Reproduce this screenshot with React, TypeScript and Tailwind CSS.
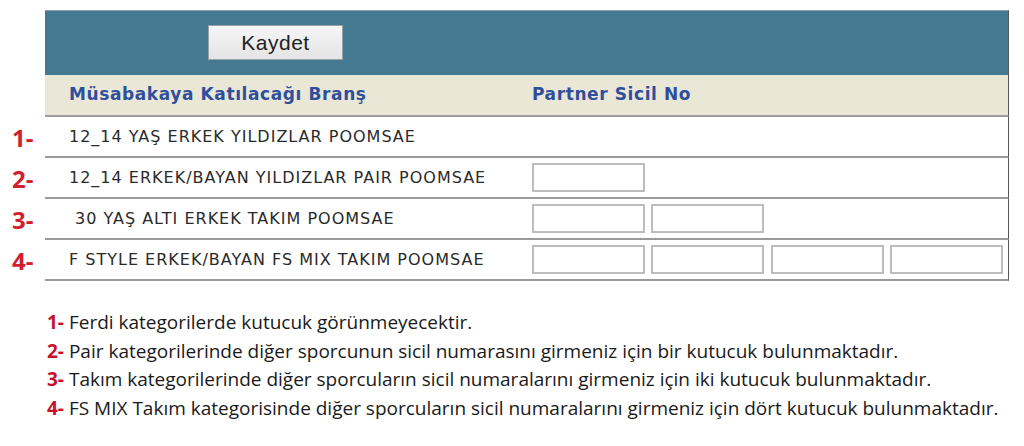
import React from "react";

const rows = [
  { n: "1-", label: "12_14 YAŞ ERKEK YILDIZLAR POOMSAE", boxes: 0, indent: false },
  { n: "2-", label: "12_14 ERKEK/BAYAN YILDIZLAR PAIR POOMSAE", boxes: 1, indent: false },
  { n: "3-", label: "30 YAŞ ALTI ERKEK TAKIM POOMSAE", boxes: 2, indent: true },
  { n: "4-", label: "F STYLE ERKEK/BAYAN FS MIX TAKIM POOMSAE", boxes: 4, indent: false },
];

const notes = [
  { n: "1-", t: "Ferdi kategorilerde kutucuk görünmeyecektir." },
  { n: "2-", t: "Pair kategorilerinde diğer sporcunun sicil numarasını girmeniz için bir kutucuk bulunmaktadır." },
  { n: "3-", t: "Takım kategorilerinde diğer sporcuların sicil numaralarını girmeniz için iki kutucuk bulunmaktadır." },
  { n: "4-", t: "FS MIX Takım kategorisinde diğer sporcuların sicil numaralarını girmeniz için dört kutucuk bulunmaktadır." },
];

export default function App() {
  return (
    <div className="w-[1024px] h-[446px] bg-white overflow-hidden pt-[10px]">
      <div className="grid grid-cols-[45px_964px]">
        {/* blue header */}
        <div />
        <div className="h-[65px] bg-[#457891] border-t border-[#8f9ea4] border-r border-r-[#555] flex items-center">
          <button className="ml-[163px] mt-[-1px] w-[135px] h-[35px] border border-[#9aa4a8] bg-gradient-to-b from-[#f6f6f6] to-[#e4e4e4] text-[21px] text-[#222] tracking-[0.5px] font-['Liberation_Sans',Arial,sans-serif]">
            Kaydet
          </button>
        </div>
        {/* beige header */}
        <div />
        <div className="h-[42px] bg-[#ebe7d6] border-b-2 border-[#9a9a9a] border-r border-r-[#555] flex items-center font-['DejaVu_Sans',Verdana,sans-serif] font-bold text-[17px] tracking-[0.6px] text-[#2f4f9c]">
          <div className="pl-[24px] w-[487px]">Müsabakaya Katılacağı Branş</div>
          <div>Partner Sicil No</div>
        </div>
        {rows.map((r) => (
          <React.Fragment key={r.n}>
            <div className="h-[41px] flex items-center pl-[12px] text-[#d11f2f] font-bold text-[24px] font-['Open_Sans',sans-serif] leading-none">
              {r.n}
            </div>
            <div className="h-[41px] border-b-2 border-[#9a9a9a] border-r border-r-[#555] flex items-center font-['DejaVu_Sans',Verdana,sans-serif] text-[16px] tracking-[1px] text-[#2a2a2a]">
              <div className={`w-[487px] ${r.indent ? "pl-[30px]" : "pl-[24px]"}`}>{r.label}</div>
              <div className="flex gap-[6px]">
                {r.boxes > 0 && (
                  <>
                    <div className="w-[113px] h-[29px] border-2 border-[#bdbdbd]" />
                    {r.boxes > 1 && <div className="w-[113px] h-[29px] border-2 border-[#bdbdbd]" />}
                    {r.boxes > 2 && (
                      <>
                        <div className="w-[113px] h-[29px] border-2 border-[#bdbdbd] ml-[1px]" />
                        <div className="w-[113px] h-[29px] border-2 border-[#bdbdbd]" />
                      </>
                    )}
                  </>
                )}
              </div>
            </div>
          </React.Fragment>
        ))}
      </div>
      <div className="pl-[47px] pt-[27px] flex flex-col font-['Open_Sans',sans-serif] text-[19px] text-[#1a1a1a] leading-[28.5px]">
        {notes.map((x) => (
          <div key={x.n} className="whitespace-nowrap">
            <span className="text-[#c8102e] font-bold">{x.n}</span> {x.t}
          </div>
        ))}
      </div>
    </div>
  );
}
